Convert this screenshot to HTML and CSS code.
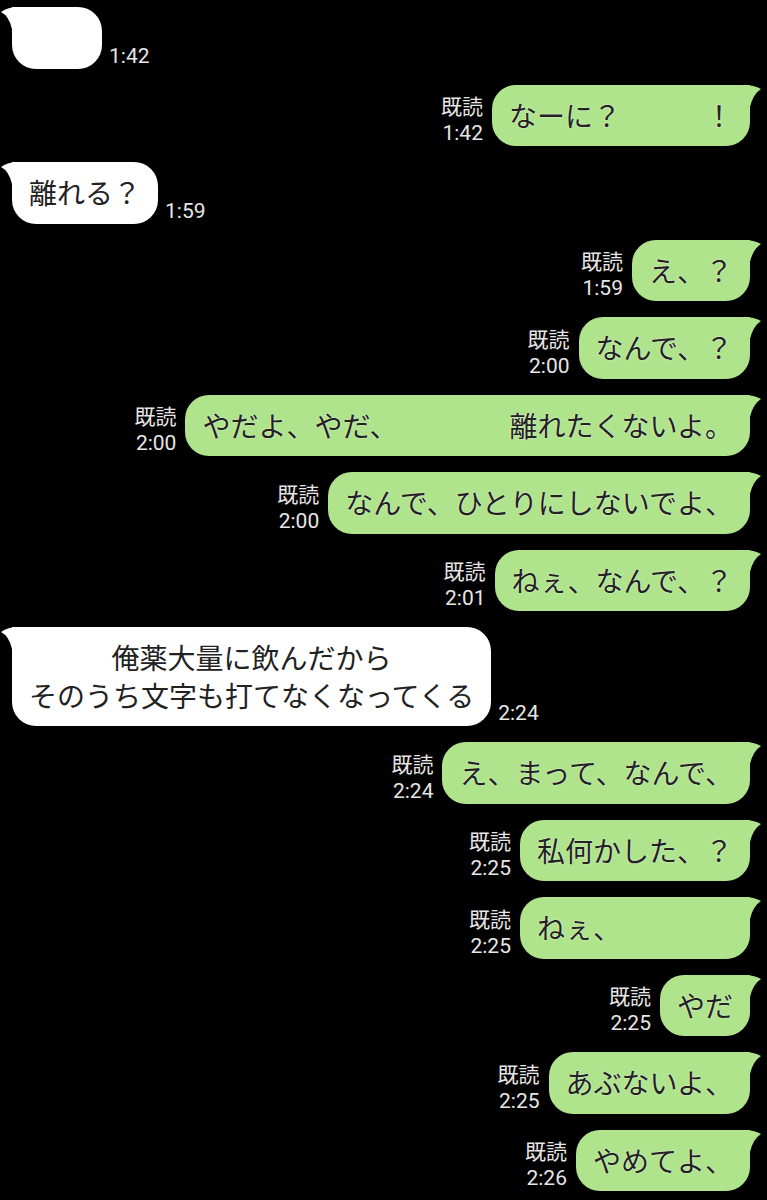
FILE: index.html
```html
<!DOCTYPE html>
<html lang="ja">
<head>
  <meta charset="UTF-8" />
  <title>トーク</title>
  <link rel="stylesheet" href="styles.css">
</head>
<body>
  <div class="chat">
    <div class="row in">
      <div class="bubble">　　<svg class="tail" viewBox="0 0 24 28"><path d="M24,0 L18,0 Q8,0 1,5 Q9,9 12,22 L12,28 L24,28 Z"/></svg></div>
      <div class="meta"><span>1:42</span></div>
    </div>

    <div class="row out">
      <div class="meta"><span>既読</span><span>1:42</span></div>
      <div class="bubble">なーに？　　　！<svg class="tail" viewBox="0 0 24 28"><path d="M0,0 L6,0 Q16,0 23,4 Q15,9 12,22 L12,28 L0,28 Z"/></svg></div>
    </div>

    <div class="row in">
      <div class="bubble">離れる？<svg class="tail" viewBox="0 0 24 28"><path d="M24,0 L18,0 Q8,0 1,5 Q9,9 12,22 L12,28 L24,28 Z"/></svg></div>
      <div class="meta"><span>1:59</span></div>
    </div>

    <div class="row out">
      <div class="meta"><span>既読</span><span>1:59</span></div>
      <div class="bubble">え、？<svg class="tail" viewBox="0 0 24 28"><path d="M0,0 L6,0 Q16,0 23,4 Q15,9 12,22 L12,28 L0,28 Z"/></svg></div>
    </div>

    <div class="row out">
      <div class="meta"><span>既読</span><span>2:00</span></div>
      <div class="bubble">なんで、？<svg class="tail" viewBox="0 0 24 28"><path d="M0,0 L6,0 Q16,0 23,4 Q15,9 12,22 L12,28 L0,28 Z"/></svg></div>
    </div>

    <div class="row out">
      <div class="meta"><span>既読</span><span>2:00</span></div>
      <div class="bubble">やだよ、やだ、　　　　離れたくないよ。<svg class="tail" viewBox="0 0 24 28"><path d="M0,0 L6,0 Q16,0 23,4 Q15,9 12,22 L12,28 L0,28 Z"/></svg></div>
    </div>

    <div class="row out">
      <div class="meta"><span>既読</span><span>2:00</span></div>
      <div class="bubble">なんで、ひとりにしないでよ、<svg class="tail" viewBox="0 0 24 28"><path d="M0,0 L6,0 Q16,0 23,4 Q15,9 12,22 L12,28 L0,28 Z"/></svg></div>
    </div>

    <div class="row out">
      <div class="meta"><span>既読</span><span>2:01</span></div>
      <div class="bubble">ねぇ、なんで、？<svg class="tail" viewBox="0 0 24 28"><path d="M0,0 L6,0 Q16,0 23,4 Q15,9 12,22 L12,28 L0,28 Z"/></svg></div>
    </div>

    <div class="row in">
      <div class="bubble multi">俺薬大量に飲んだから<br>そのうち文字も打てなくなってくる<svg class="tail" viewBox="0 0 24 28"><path d="M24,0 L18,0 Q8,0 1,5 Q9,9 12,22 L12,28 L24,28 Z"/></svg></div>
      <div class="meta"><span>2:24</span></div>
    </div>

    <div class="row out">
      <div class="meta"><span>既読</span><span>2:24</span></div>
      <div class="bubble">え、まって、なんで、<svg class="tail" viewBox="0 0 24 28"><path d="M0,0 L6,0 Q16,0 23,4 Q15,9 12,22 L12,28 L0,28 Z"/></svg></div>
    </div>

    <div class="row out">
      <div class="meta"><span>既読</span><span>2:25</span></div>
      <div class="bubble">私何かした、？<svg class="tail" viewBox="0 0 24 28"><path d="M0,0 L6,0 Q16,0 23,4 Q15,9 12,22 L12,28 L0,28 Z"/></svg></div>
    </div>

    <div class="row out">
      <div class="meta"><span>既読</span><span>2:25</span></div>
      <div class="bubble">ねぇ、　　　　<svg class="tail" viewBox="0 0 24 28"><path d="M0,0 L6,0 Q16,0 23,4 Q15,9 12,22 L12,28 L0,28 Z"/></svg></div>
    </div>

    <div class="row out">
      <div class="meta"><span>既読</span><span>2:25</span></div>
      <div class="bubble">やだ<svg class="tail" viewBox="0 0 24 28"><path d="M0,0 L6,0 Q16,0 23,4 Q15,9 12,22 L12,28 L0,28 Z"/></svg></div>
    </div>

    <div class="row out">
      <div class="meta"><span>既読</span><span>2:25</span></div>
      <div class="bubble">あぶないよ、<svg class="tail" viewBox="0 0 24 28"><path d="M0,0 L6,0 Q16,0 23,4 Q15,9 12,22 L12,28 L0,28 Z"/></svg></div>
    </div>

    <div class="row out">
      <div class="meta"><span>既読</span><span>2:26</span></div>
      <div class="bubble">やめてよ、<svg class="tail" viewBox="0 0 24 28"><path d="M0,0 L6,0 Q16,0 23,4 Q15,9 12,22 L12,28 L0,28 Z"/></svg></div>
    </div>
  </div>
</body>
</html>
```

FILE: styles.css
```css
body {
  margin: 0;
  background: #000;
  font-family: "Noto Sans CJK JP", "Noto Sans", sans-serif;
}

.chat {
  display: flex;
  flex-direction: column;
  gap: 16px;
  padding: 7px 17px 0 12px;
}

.row {
  display: flex;
  align-items: flex-end;
}

.row.out {
  justify-content: flex-end;
}

.bubble {
  position: relative;
  padding: 12px 17px;
  font-size: 28px;
  line-height: 37.5px;
  color: #222;
  white-space: nowrap;
  text-spacing-trim: space-all;
  border-radius: 24px;
  text-shadow: 0 0 1.5px #fff;
}

.in .bubble {
  background: #fff;
  border-top-left-radius: 0;
}

.out .bubble {
  background: #b0e48c;
  border-top-right-radius: 0;
}

.bubble.multi {
  text-align: center;
}

.tail {
  position: absolute;
  top: 0;
  width: 24px;
  height: 28px;
}

.out .tail {
  right: -12px;
  fill: #b0e48c;
}

.in .tail {
  left: -12px;
  fill: #fff;
}

.meta {
  display: flex;
  flex-direction: column;
  align-items: flex-end;
  font-family: Roboto, "Noto Sans CJK JP", sans-serif;
  font-size: 21px;
  line-height: 26px;
  color: #e6e6e6;
}

.out .meta {
  margin-right: 9px;
}

.in .meta {
  margin-left: 7px;
}
```
